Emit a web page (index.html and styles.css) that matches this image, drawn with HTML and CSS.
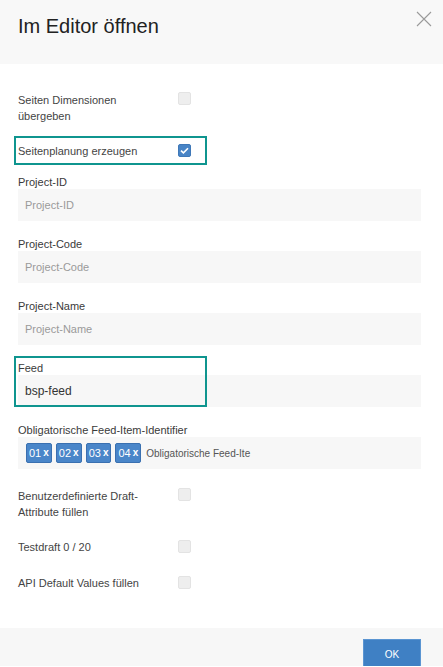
FILE: index.html
```html
<!DOCTYPE html>
<html lang="de">
<head>
<meta charset="utf-8">
<title>Im Editor öffnen</title>
<link rel="stylesheet" href="styles.css">
</head>
<body>
<div class="modal">
  <header class="header">
    <h1 class="title">Im Editor öffnen</h1>
    <button class="close" aria-label="Schließen">
      <svg width="16" height="16" viewBox="0 0 16 16"><path d="M1 1L15 15M15 1L1 15" stroke="#9a9a9a" stroke-width="1.1" fill="none"/></svg>
    </button>
  </header>
  <main class="content">
    <div class="check-row">
      <span class="check-label">Seiten Dimensionen übergeben</span>
      <span class="box"></span>
    </div>
    <div class="check-row single highlighted hl-check">
      <span class="check-label">Seitenplanung erzeugen</span>
      <span class="box checked">
        <svg width="11" height="11" viewBox="0 0 11 11"><path d="M2 5.6L4.4 7.8L9 3.2" stroke="#fff" stroke-width="1.6" fill="none"/></svg>
      </span>
    </div>
    <div class="group first">
      <label class="field-label">Project-ID</label>
      <div class="input placeholder">Project-ID</div>
    </div>
    <div class="group">
      <label class="field-label">Project-Code</label>
      <div class="input placeholder">Project-Code</div>
    </div>
    <div class="group">
      <label class="field-label">Project-Name</label>
      <div class="input placeholder">Project-Name</div>
    </div>
    <div class="group highlighted hl-feed">
      <label class="field-label">Feed</label>
      <div class="input value">bsp-feed</div>
    </div>
    <div class="group">
      <label class="field-label">Obligatorische Feed-Item-Identifier</label>
      <div class="input tags">
        <span class="tag">01 <b>x</b></span>
        <span class="tag">02 <b>x</b></span>
        <span class="tag">03 <b>x</b></span>
        <span class="tag">04 <b>x</b></span>
        <span class="tag-placeholder">Obligatorische Feed-Ite</span>
      </div>
    </div>
    <div class="check-row after-fields">
      <span class="check-label">Benutzerdefinierte Draft-Attribute füllen</span>
      <span class="box"></span>
    </div>
    <div class="check-row single">
      <span class="check-label">Testdraft 0 / 20</span>
      <span class="box"></span>
    </div>
    <div class="check-row single last">
      <span class="check-label">API Default Values füllen</span>
      <span class="box"></span>
    </div>
  </main>
  <footer class="footer">
    <button class="ok">OK</button>
  </footer>
</div>
</body>
</html>
```
FILE: styles.css
```css
html, body {
  margin: 0;
  padding: 0;
  height: 667px;
  overflow: hidden;
  background: #ffffff;
}
body {
  font-family: "Liberation Sans", Arial, sans-serif;
  color: #3a3a3a;
  font-size: 11px;
}
.modal {
  width: 443px;
  display: flex;
  flex-direction: column;
}
.header {
  height: 64px;
  background: #f8f8f8;
  display: flex;
  align-items: flex-start;
  justify-content: space-between;
  padding: 0 11px 0 18px;
  box-sizing: border-box;
}
.title {
  margin: 14px 0 0 0;
  font-size: 20px;
  line-height: 24px;
  font-weight: normal;
  color: #222222;
}
.close {
  margin-top: 11px;
  padding: 0;
  border: 0;
  background: transparent;
  width: 16px;
  height: 16px;
  display: flex;
}
.content {
  padding: 28px 22px 37px 18px;
  display: flex;
  flex-direction: column;
}
.check-row {
  display: flex;
  align-items: flex-start;
  line-height: 16px;
  margin-bottom: 19px;
}
.check-row.single {
  margin-bottom: 20px;
}
.check-row.hl-check {
  margin-bottom: 16px;
}
.check-row.last {
  margin-bottom: 0;
}
.check-label {
  width: 140px;
  color: #444444;
}
.box {
  width: 13px;
  height: 13px;
  box-sizing: border-box;
  margin: 0 0 0 20px;
  background: #eeeeee;
  border: 1px solid #e3e3e3;
  border-radius: 2px;
  display: flex;
  align-items: center;
  justify-content: center;
}
.single .box {
  margin-top: 1px;
}
.box.checked {
  background: #4884c6;
  border-color: #3f78b8;
}
.highlighted {
  position: relative;
}
.highlighted::after {
  content: "";
  position: absolute;
  left: -4px;
  width: 193px;
  border: 2px solid #0f958f;
  box-sizing: border-box;
  pointer-events: none;
}
.hl-check::after {
  top: -7px;
  height: 29px;
}
.hl-feed::after {
  top: -5px;
  height: 51px;
}
.group {
  display: flex;
  flex-direction: column;
  margin-bottom: 16px;
}
.field-label {
  line-height: 14px;
  color: #3a3a3a;
}
.input {
  height: 32px;
  background: #f7f7f7;
  box-sizing: border-box;
  padding-left: 7px;
  display: flex;
  align-items: center;
}
.placeholder {
  color: #9a9a9a;
}
.value {
  color: #333333;
  font-size: 12px;
}
.tags {
  padding-left: 8px;
  gap: 4px;
}
.tag {
  height: 20px;
  box-sizing: border-box;
  padding: 0 2px;
  background: #4a86c9;
  border: 1px solid #3a70b0;
  border-radius: 2px;
  color: #ffffff;
  font-size: 11px;
  line-height: 18px;
  display: flex;
  align-items: center;
  gap: 2px;
}
.tag b {
  font-weight: bold;
  font-size: 10px;
}
.tag-placeholder {
  margin-left: 1px;
  font-size: 10px;
  color: #555555;
}
.check-row.after-fields {
  margin-top: 3px;
}
.footer {
  background: #f7f7f7;
  height: 38px;
  overflow: hidden;
  padding: 11px 22px 0 0;
  box-sizing: border-box;
  display: flex;
  justify-content: flex-end;
  align-items: flex-start;
}
.ok {
  flex-shrink: 0;
  width: 58px;
  height: 30px;
  background: #3f80c4;
  border: 1px solid #5b95d2;
  border-bottom: 0;
  color: #ffffff;
  font-family: "Liberation Sans", Arial, sans-serif;
  font-size: 10px;
  padding: 0;
}
```
